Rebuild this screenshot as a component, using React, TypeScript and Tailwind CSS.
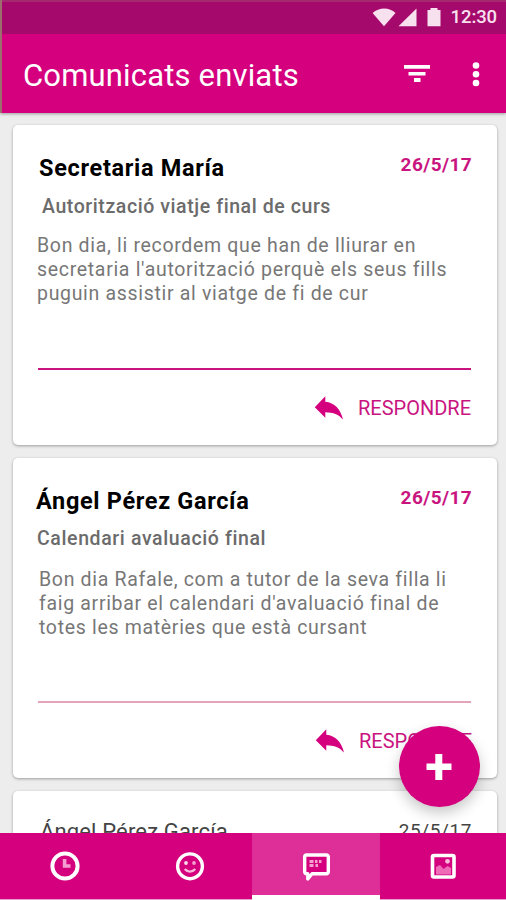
import clsx from "clsx";

interface Message {
  name: string;
  nameClass: string;
  date: string;
  subject: string;
  subjectClass: string;
  lines: string[];
  bodyClass: string;
  lineClass: string;
  replyClass: string;
}

const messages: Message[] = [
  {
    name: "Secretaria María",
    nameClass: "pl-[26px] tracking-[0.68px]",
    date: "26/5/17",
    subject: "Autorització viatje final de curs",
    subjectClass: "mt-[8px] pl-[29px] tracking-[0.58px]",
    lines: [
      "Bon dia, li recordem que han de lliurar en",
      "secretaria l'autorització perquè els seus fills",
      "puguin assistir al viatge de fi de cur",
    ],
    bodyClass: "mt-[11px] pl-6",
    lineClass: "mt-[62px] bg-[#c9147f]",
    replyClass: "mr-[26px]",
  },
  {
    name: "Ángel Pérez García",
    nameClass: "pl-[23px] tracking-[0.66px]",
    date: "26/5/17",
    subject: "Calendari avaluació final",
    subjectClass: "mt-[7px] pl-6 tracking-[0.62px]",
    lines: [
      "Bon dia Rafale, com a tutor de la seva filla li",
      "faig arribar el calendari d'avaluació final de",
      "totes les matèries que està cursant",
    ],
    bodyClass: "mt-[13px] pl-[26px]",
    lineClass: "mt-[61px] bg-[#e3a3ba]",
    replyClass: "mr-[25px]",
  },
];

const ReplyIcon = () => (
  <svg width="30" height="26" viewBox="0 0 30 26" fill="#d4007e">
    <path d="M.8 12.2 11.3 1.2V6.8C20.5 7.8 26.6 14 29 24.6 24.8 19.5 19.3 17.4 11.3 17.2V22.8Z" />
  </svg>
);

const ClockIcon = () => (
  <svg width="30" height="30" viewBox="0 0 30 30" fill="none">
    <circle cx="15" cy="15" r="12.6" stroke="#fff" strokeWidth="4" />
    <path d="M14.6 8V15H20.5" stroke="#f3a0d0" strokeWidth="3.6" />
  </svg>
);

const SmileIcon = () => (
  <svg width="30" height="30" viewBox="0 0 30 30" fill="none">
    <circle cx="15" cy="15.3" r="12.4" stroke="#fff" strokeWidth="3.4" />
    <circle cx="11" cy="12" r="1.9" fill="#fbd9ec" />
    <circle cx="19" cy="12" r="1.9" fill="#f3a0d0" />
    <path d="M9.8 18c2.6 3.4 7.8 3.400 10.400 0" stroke="#f8b8dc" strokeWidth="2.2" />
  </svg>
);

const ChatIcon = () => (
  <svg width="30" height="30" viewBox="0 0 30 30" fill="none">
    <path
      d="M4.5 3h20a1.800 1.800 0 0 1 1.800 1.800V20a1.800 1.800 0 0 1-1.800 1.800H10L5.800 27v-5.200H4.500A1.800 1.800 0 0 1 2.700 20V4.800A1.800 1.800 0 0 1 4.500 3Z"
      fill="#d4007e"
      stroke="#fff"
      strokeWidth="3.4"
      strokeLinejoin="round"
    />
    <path d="M7.500 9.500h4M13 9.500h2.500M17 9.500h2.500M7.500 13.500h4M13.500 13.500h2.500" stroke="#f3a0d0" strokeWidth="3" />
  </svg>
);

const ImageIcon = () => (
  <svg width="30" height="30" viewBox="0 0 30 30" fill="none">
    <rect x="4.500" y="4.500" width="21.500" height="21.500" rx="1.500" stroke="#fff" strokeWidth="3.6" />
    <path d="M8 23.500V16L12 14l3.500 4 4-3 3.500 2v6.500Z" fill="#ee6bb8" />
    <circle cx="19.500" cy="10.300" r="2.400" fill="#f8b8dc" />
  </svg>
);

const tabs = [
  { icon: <ClockIcon />, active: false, className: "w-[126px] pl-[4px]" },
  { icon: <SmileIcon />, active: false, className: "w-[126px] pl-[2px]" },
  { icon: <ChatIcon />, active: true, className: "w-[128px] pl-[2px]" },
  { icon: <ImageIcon />, active: false, className: "w-[126px] pr-px" },
];

const Header = () => (
  <header className="relative z-10 shrink-0 border-l-2 border-[#9c6e6e] text-white shadow-[0_1px_3px_rgba(0,0,0,0.35)]">
    <div className="flex h-[34px] items-center justify-end border-t-2 border-[#a5296f] bg-[#a6096c] pr-[9px]">
      <svg width="70" height="22" viewBox="0 0 70 22" fill="#f8e1ef" className="mt-[-3px] mr-[9px]">
        <path d="M.6 7C7 1 17.500 1 23.500 7L12 20.300Z" />
        <path d="M44.500 2.500V20.300H26.500Z" />
        <path d="M55.500 4h3V2h7v2h3v16.300H55.500Z" />
      </svg>
      <span className="mt-[-2px] text-[18.5px] font-medium leading-none tracking-[-0.1px] text-[#f8e1ef]">12:30</span>
    </div>
    <div className="flex h-[79px] items-center bg-[#d4007e] pl-[21px]">
      <h1 className="mt-[3px] flex-1 whitespace-nowrap text-[31px] leading-none tracking-[0.17px]">Comunicats enviats</h1>
      <svg width="26" height="18" viewBox="0 0 26 18" fill="#fff" className="mr-[42px]">
        <path d="M0 0h26v3.800H0zM4.500 7h17v3.500h-17zM10 13h6.500v4H10z" />
      </svg>
      <svg width="8" height="26" viewBox="0 0 8 26" fill="#fff" className="mr-[26px]">
        <circle cx="4" cy="4.500" r="3.300" />
        <circle cx="4" cy="13.200" r="3.300" />
        <circle cx="4" cy="22" r="3.300" />
      </svg>
    </div>
  </header>
);

const MessageCard = ({ message }: { message: Message }) => (
  <article className="h-[320px] shrink-0 rounded-[5px] bg-white pt-[28px] shadow-[0_1px_3px_rgba(0,0,0,0.35)]">
    <div className="flex justify-between pr-[25px]">
      <h2 className={clsx("whitespace-nowrap pt-px text-[23.5px] font-bold leading-[29px] text-black", message.nameClass)}>
        {message.name}
      </h2>
      <span className="pt-px text-[19px] font-bold leading-[22px] tracking-[0.4px] text-[#c9147f]">{message.date}</span>
    </div>
    <h3 className={clsx("whitespace-nowrap text-[19.5px] font-medium leading-[32px] text-[#6b6b6b]", message.subjectClass)}>
      {message.subject}
    </h3>
    <div className={clsx("whitespace-nowrap text-[19.5px] leading-[24px] tracking-[0.68px] text-[#777]", message.bodyClass)}>
      {message.lines.map((line) => (
        <p key={line}>{line}</p>
      ))}
    </div>
    <div className={clsx("mr-[26px] ml-[25px] h-[2px]", message.lineClass)} />
    <div className={clsx("mt-[25px] flex items-center justify-end gap-[14px]", message.replyClass)}>
      <ReplyIcon />
      <span className="text-[20px] leading-[26px] text-[#c9147f]">RESPONDRE</span>
    </div>
  </article>
);

const App = () => {
  return (
    <div className="relative flex h-[900px] w-[506px] flex-col overflow-hidden bg-[#ededed] font-['Roboto',sans-serif]">
      <Header />
      <main className="flex min-h-0 flex-1 flex-col gap-[13px] overflow-hidden pt-[12px] pr-[9px] pl-[13px]">
        {messages.map((message) => (
          <MessageCard key={message.name} message={message} />
        ))}
        <article className="flex h-[320px] shrink-0 justify-between rounded-[5px] bg-white pt-[26px] pr-[25px] pl-[27px] shadow-[0_1px_3px_rgba(0,0,0,0.35)]">
          <h2 className="text-[22px] leading-[30px] tracking-[0.15px] text-[#444]">Ángel Pérez García</h2>
          <span className="text-[19px] leading-[28px] tracking-[0.6px] text-[#444]">25/5/17</span>
        </article>
      </main>
      <button className="absolute top-[726px] left-[399px] z-10 flex size-[81px] items-center justify-center rounded-full bg-[#d4007e] shadow-[0_6px_14px_rgba(0,0,0,0.22)]">
        <svg width="26" height="26" viewBox="0 0 26 26" fill="#fff" className="mr-px">
          <path d="M9.300 0h7v9.500H25.500v6.500H16.300V26h-7V16H.500V9.500H9.300Z" />
        </svg>
      </button>
      <nav className="flex h-[67px] shrink-0 bg-[#d4007e]">
        {tabs.map((tab, i) => (
          <div
            key={i}
            className={clsx(
              "flex items-center justify-center",
              tab.className,
              tab.active ? "border-b-[5px] border-white bg-[#de2e97] pt-[5px]" : "border-b border-[#e9a0cb]"
            )}
          >
            {tab.icon}
          </div>
        ))}
      </nav>
    </div>
  );
};

export default App;
